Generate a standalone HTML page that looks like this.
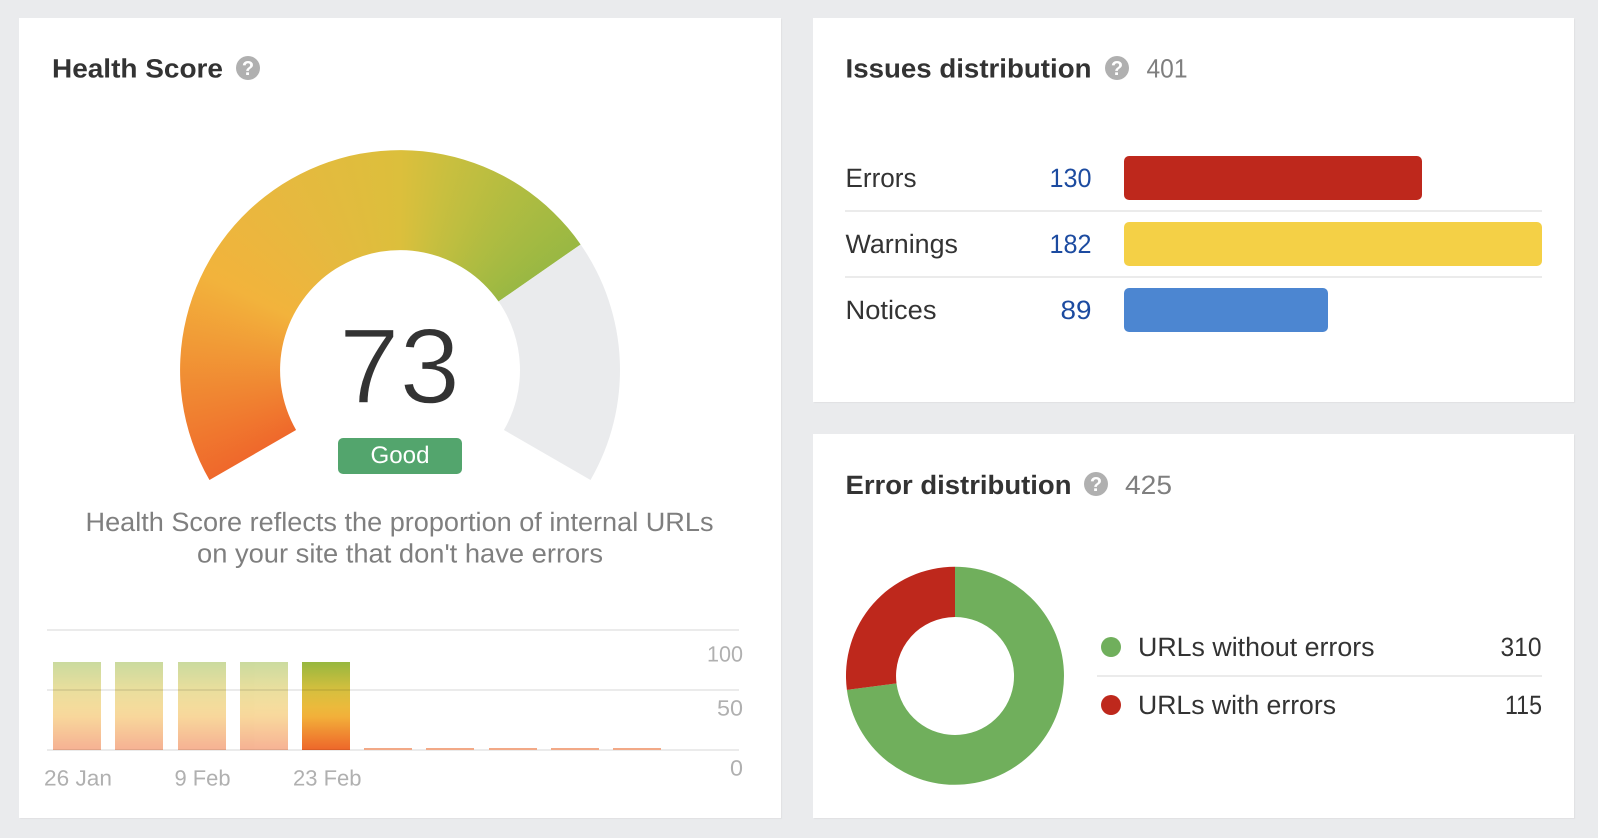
<!DOCTYPE html>
<html lang="en">
<head>
<meta charset="utf-8">
<title>Site Audit Overview</title>
<style>
html,body{margin:0;padding:0;width:1598px;height:838px;overflow:hidden;background:#eaebed}
.card{position:absolute;background:#fff;box-shadow:1px 1px 1px rgba(0,0,0,.045)}
#arc{position:absolute;left:180px;top:150px;width:440px;height:440px;
background:conic-gradient(from 240deg at 50% 50%,#ef682b 0deg,#f2b33c 56deg,#e6b93f 88deg,#dcbf3c 120deg,#c8bf3f 134deg,#b0bc41 154deg,#99b843 175.2deg,#99b843 300deg,#ef682b 300deg);
clip-path:path('M29.47 330 A220 220 0 0 1 400.64 94.45 L318.53 151.52 A120 120 0 0 0 116.08 280Z')}
svg{position:absolute;left:0;top:0}
text{font-family:"Liberation Sans",sans-serif;text-rendering:geometricPrecision}
.t{font-size:26.5px;font-weight:700;fill:#333}
.m{font-size:26.5px;fill:#7f7f7f}
.r{font-size:26.5px;fill:#333}
.n{font-size:26.5px;fill:#1c4ba0}
.a{font-size:22px;fill:#b0b0b0}
.q{font-size:20px;font-weight:700;fill:#fff;text-anchor:middle}
</style>
</head>
<body>
<div class="card" style="left:19px;top:18px;width:762px;height:800px"></div>
<div class="card" style="left:813px;top:18px;width:761px;height:384px"></div>
<div class="card" style="left:813px;top:434px;width:761px;height:384px"></div>
<div id="arc"></div>
<svg width="1598" height="838" viewBox="0 0 1598 838" xmlns="http://www.w3.org/2000/svg">
<defs>
<linearGradient id="b" x1="0" y1="0" x2="0" y2="1">
<stop offset="0" stop-color="#97b73f"/><stop offset=".32" stop-color="#d6bf3e"/><stop offset=".51" stop-color="#ebba3c"/><stop offset=".62" stop-color="#f2b03a"/><stop offset=".81" stop-color="#f08a32"/><stop offset="1" stop-color="#ee662a"/>
</linearGradient>
</defs>

<!-- Health score -->
<text class="t" x="52" y="77.5" textLength="171" lengthAdjust="spacingAndGlyphs">Health Score</text>
<circle cx="248" cy="68" r="12" fill="#b0b0b0"/>
<text class="q" x="248" y="75">?</text>

<path d="M580.64 244.45A220 220 0 0 1 590.53 480L503.92 430A120 120 0 0 0 498.53 301.52Z" fill="#eaebed"/>

<text x="339" y="403" font-size="107" fill="#333" stroke="#fff" stroke-width="1.5" textLength="121" lengthAdjust="spacingAndGlyphs">73</text>
<rect x="338" y="438" width="124" height="36" rx="5" fill="#53a56d"/>
<text x="370.5" y="463" font-size="24" fill="#fff" textLength="59" lengthAdjust="spacingAndGlyphs">Good</text>

<text class="m" x="85.5" y="531" textLength="628" lengthAdjust="spacingAndGlyphs">Health Score reflects the proportion of internal URLs</text>
<text class="m" x="197" y="562.5" textLength="406" lengthAdjust="spacingAndGlyphs">on your site that don't have errors</text>

<g fill="url(#b)" opacity=".5">
<rect x="53" y="662" width="48" height="88"/>
<rect x="115" y="662" width="48" height="88"/>
<rect x="178" y="662" width="48" height="88"/>
<rect x="240" y="662" width="48" height="88"/>
</g>
<rect x="302" y="662" width="48" height="88" fill="url(#b)"/>
<g fill="#000" fill-opacity=".08">
<rect x="47" y="629" width="692" height="2"/>
<rect x="47" y="689" width="692" height="2"/>
<rect x="47" y="749" width="692" height="2"/>
</g>
<g fill="#f2a987">
<rect x="364" y="748" width="48" height="2"/>
<rect x="426" y="748" width="48" height="2"/>
<rect x="489" y="748" width="48" height="2"/>
<rect x="551" y="748" width="48" height="2"/>
<rect x="613" y="748" width="48" height="2"/>
</g>
<text class="a" x="44" y="785.5" textLength="68" lengthAdjust="spacingAndGlyphs">26 Jan</text>
<text class="a" x="174.5" y="785.5" textLength="56" lengthAdjust="spacingAndGlyphs">9 Feb</text>
<text class="a" x="293" y="785.5" textLength="68.5" lengthAdjust="spacingAndGlyphs">23 Feb</text>
<text class="a" x="707" y="661.5" textLength="36" lengthAdjust="spacingAndGlyphs">100</text>
<text class="a" x="717" y="715.5" textLength="26" lengthAdjust="spacingAndGlyphs">50</text>
<text class="a" x="730" y="775.5" textLength="13" lengthAdjust="spacingAndGlyphs">0</text>

<!-- Issues distribution -->
<text class="t" x="845.5" y="77.5" textLength="246" lengthAdjust="spacingAndGlyphs">Issues distribution</text>
<circle cx="1117" cy="68" r="12" fill="#b0b0b0"/>
<text class="q" x="1117" y="75">?</text>
<text class="m" x="1146.5" y="77.5" textLength="41" lengthAdjust="spacingAndGlyphs">401</text>

<text class="r" x="845.5" y="187" textLength="71" lengthAdjust="spacingAndGlyphs">Errors</text>
<text class="r" x="845.5" y="253" textLength="112.5" lengthAdjust="spacingAndGlyphs">Warnings</text>
<text class="r" x="845.5" y="319" textLength="91" lengthAdjust="spacingAndGlyphs">Notices</text>
<text class="n" x="1049.5" y="187" textLength="42" lengthAdjust="spacingAndGlyphs">130</text>
<text class="n" x="1049.5" y="253" textLength="42" lengthAdjust="spacingAndGlyphs">182</text>
<text class="n" x="1060.5" y="319" textLength="31" lengthAdjust="spacingAndGlyphs">89</text>
<rect x="1124" y="156" width="298" height="44" rx="5" fill="#be281c"/>
<rect x="1124" y="222" width="418" height="44" rx="5" fill="#f4d046"/>
<rect x="1124" y="288" width="204" height="44" rx="5" fill="#4c86d1"/>
<rect x="845" y="210" width="697" height="2" fill="#ebebeb"/>
<rect x="845" y="276" width="697" height="2" fill="#ebebeb"/>

<!-- Error distribution -->
<text class="t" x="845.5" y="494" textLength="226" lengthAdjust="spacingAndGlyphs">Error distribution</text>
<circle cx="1096" cy="484" r="12" fill="#b0b0b0"/>
<text class="q" x="1096" y="491">?</text>
<text class="m" x="1125" y="494" textLength="47" lengthAdjust="spacingAndGlyphs">425</text>

<path d="M955 566.8A109 109 0 1 1 846.9 689.9L896.5 683.4A59 59 0 1 0 955 617Z" fill="#70af5c"/>
<path d="M955 566.8A109 109 0 0 0 846.9 689.9L896.5 683.4A59 59 0 0 1 955 617Z" fill="#be281c"/>

<circle cx="1111" cy="647" r="10" fill="#70af5c"/>
<circle cx="1111" cy="705" r="10" fill="#be281c"/>
<text class="r" x="1138" y="656" textLength="236.5" lengthAdjust="spacingAndGlyphs">URLs without errors</text>
<text class="r" x="1138" y="714" textLength="198" lengthAdjust="spacingAndGlyphs">URLs with errors</text>
<text class="r" x="1500.5" y="656" textLength="41" lengthAdjust="spacingAndGlyphs">310</text>
<text class="r" x="1505" y="714" textLength="37" lengthAdjust="spacingAndGlyphs">115</text>
<rect x="1097" y="675" width="445" height="2" fill="#ebebeb"/>
</svg>
</body>
</html>
